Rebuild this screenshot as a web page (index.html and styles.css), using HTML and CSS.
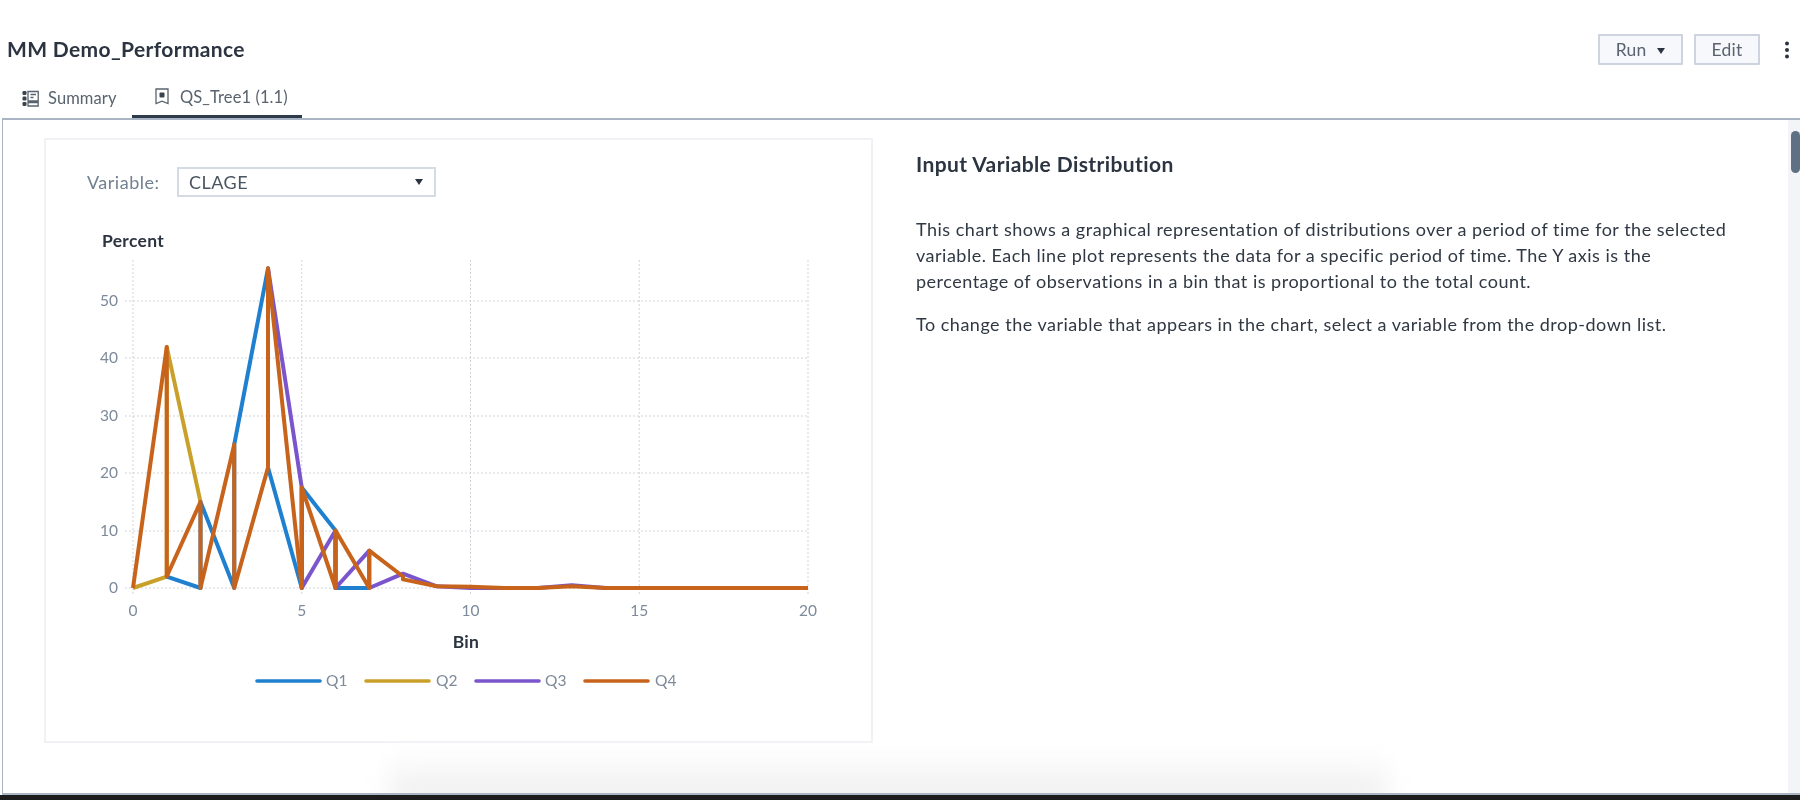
FILE: index.html
```html
<!DOCTYPE html>
<html lang="en">
<head>
<meta charset="utf-8">
<title>MM Demo_Performance</title>
<link rel="stylesheet" href="styles.css">
</head>
<body>
<div class="app">
  <header class="header">
    <h1 class="title">MM Demo_Performance</h1>
    <div class="actions">
      <button class="btn btn-run">Run <span class="caret"></span></button>
      <button class="btn btn-edit">Edit</button>
      <svg class="kebab" width="6" height="18" viewBox="0 0 6 18"><circle cx="3" cy="2.6" r="2"/><circle cx="3" cy="9" r="2"/><circle cx="3" cy="15.4" r="2"/></svg>
    </div>
  </header>
  <nav class="tabs">
    <div class="tab tab-summary">
      <svg class="tab-icon" width="17" height="17" viewBox="0 0 17 17"><g class="ic-fill"><rect x="0.5" y="1" width="4" height="4" rx="1.2"/><rect x="0.5" y="6.5" width="4" height="4" rx="1.2"/><rect x="0.5" y="12" width="4" height="4" rx="1.2"/></g><g class="ic-line"><path d="M6 1.500h10.200v9.500H6zM6 12.500h10.200v3.500H6z"/><path d="M8.500 4.500h5.500M8.500 7.500h3"/></g></svg>
      <span>Summary</span>
    </div>
    <div class="tab tab-active">
      <svg class="tab-icon" width="14" height="17" viewBox="0 0 14 17"><path class="ic-line" d="M1 1h12v14.600l-6-2.400-6 2.400z"/><rect class="ic-fill" x="4.500" y="4.500" width="5" height="5" rx="1"/></svg>
      <span>QS_Tree1 (1.1)</span>
    </div>
  </nav>
  <main class="panel">
    <section class="card">
      <div class="var-row">
        <label class="var-label">Variable:</label>
        <div class="select"><span>CLAGE</span><span class="caret"></span></div>
      </div>
      <svg class="chart" width="825" height="500" viewBox="0 0 825 500">
        <text class="axis-title" x="56" y="27">Percent</text>
        <g class="grid">
          <path d="M79 81H762M79 138H762M79 196H762M79 253H762M79 311H762M79 368H762"/>
          <path d="M87 40V376M255.750 40V376M424.500 40V376M593.250 40V376M762 40V376"/>
        </g>
        <g class="tick tick-y">
          <text x="72" y="86">50</text><text x="72" y="143">40</text><text x="72" y="201">30</text><text x="72" y="258">20</text><text x="72" y="316">10</text><text x="72" y="373">0</text>
        </g>
        <g class="tick tick-x">
          <text x="87" y="396">0</text><text x="255.750" y="396">5</text><text x="424.500" y="396">10</text><text x="593.250" y="396">15</text><text x="762" y="396">20</text>
        </g>
        <text class="axis-title axis-bin" x="420" y="428">Bin</text>
        <g transform="translate(87 368) scale(33.75 -5.74)">
          <polyline class="s q2" points="0,0 1,2 1,42 2,15"/>
          <polyline class="s q1" points="1,2 2,0 2,15 3,0 3,25 4,55.7 4,21 5,0 5,17.5 6,10 6,0 7,0"/>
          <polyline class="s q3" points="4,55.7 5,17.5 5,0 6,10 6,0 7,6.500 7,0 8,2.500 9,0.300 10,0 12,0 13,0.500 14,0 20,0"/>
          <polyline class="s q4" points="0,0 1,42 1,2 2,15 2,0 3,25 3,0 4,21 4,55.7 5,0 5,17.5 6,0 6,10 7,0 7,6.500 8,2 8,1.500 9,0.300 10,0.200 11,0 12,0 13,0.300 14,0 20,0"/>
        </g>
        <g class="legend">
          <path class="l q1" d="M211 461H274"/><text x="280" y="466">Q1</text>
          <path class="l q2" d="M320 461H383"/><text x="390" y="466">Q2</text>
          <path class="l q3" d="M430 461H493"/><text x="499" y="466">Q3</text>
          <path class="l q4" d="M539 461H602"/><text x="609" y="466">Q4</text>
        </g>
      </svg>
    </section>
    <section class="info">
      <h2 class="info-title">Input Variable Distribution</h2>
      <p>This chart shows a graphical representation of distributions over a period of time for the selected variable. Each line plot represents the data for a specific period of time. The Y axis is the percentage of observations in a bin that is proportional to the total count.</p>
      <p>To change the variable that appears in the chart, select a variable from the drop-down list.</p>
    </section>
    <div class="scroll-track"><div class="scroll-thumb"></div></div>
    <div class="bottom-shade"></div>
  </main>
  <footer class="strip"></footer>
</div>
</body>
</html>
```
FILE: styles.css
```css
* { box-sizing: border-box; }
html, body { margin: 0; height: 100%; background: #fff; overflow: hidden; }
body { font-family: "Lato", "Noto Sans", sans-serif; color: #2b3440; }
.app { height: 800px; display: flex; flex-direction: column; filter: blur(0.45px); }

.header { display: flex; justify-content: space-between; align-items: center; padding: 34px 10px 0 7px; }
.title { margin: 0 0 2px; font-size: 21px; letter-spacing: 0.35px; line-height: 29px; font-weight: 700; color: #2b3440; }
.actions { display: flex; align-items: center; }
.btn { height: 31px; padding: 0; font: 400 17.5px "Lato", sans-serif; letter-spacing: 0.2px; color: #59636f; background: #f6f8fb; border: 2px solid #cdd4df; border-radius: 1px; }
.btn-run { width: 85px; margin-right: 11px; }
.btn-edit { width: 66px; margin-right: 24px; }
.btn .caret { margin-left: 6px; }
.caret { display: inline-block; vertical-align: 2px; width: 0; height: 0; border-left: 4px solid transparent; border-right: 4px solid transparent; border-top: 6px solid #2b3440; }
.kebab { fill: #2b3440; }

.tabs { display: flex; height: 53px; padding: 13px 0 0 22px; }
.tab { display: flex; align-items: center; height: 40px; font-size: 16.5px; letter-spacing: 0.1px; color: #59636f; }
.tab-summary { gap: 9px; width: 110px; }
.tab-active { gap: 11px; width: 170px; padding-left: 23px; border-bottom: 3px solid #2d3a4a; margin-bottom: -1px; position: relative; z-index: 1; }
.tab-icon { flex: none; }
.ic-fill { fill: #3a4450; }
.ic-line { fill: none; stroke: #59636f; stroke-width: 1.3; }

.panel { flex: 1; min-height: 0; position: relative; overflow: hidden; display: flex; align-items: flex-start; margin-left: 2px; border-top: 2px solid #a9b5c5; border-left: 1px solid #a9b5c5; border-bottom: 2px solid #a9b5c5; }
.card { flex: none; width: 829px; height: 605px; margin: 18px 0 0 41px; border: 2px solid #eff1f4; }
.var-row { display: flex; align-items: center; height: 30px; margin-top: 27px; padding-left: 41px; }
.var-label { width: 90px; padding-bottom: 1px; font-size: 18px; letter-spacing: 0.5px; color: #72808f; }
.select { display: flex; align-items: center; justify-content: space-between; width: 259px; height: 30px; padding: 0 11px 1px 10px; font-size: 18px; letter-spacing: 0.5px; color: #4b5561; border: 2px solid #d5dbe4; }
.chart { display: block; margin-top: 23px; }
.axis-title { font-size: 17.5px; letter-spacing: 0.3px; font-weight: 700; fill: #2b3440; }
.axis-bin { text-anchor: middle; }
.grid path { fill: none; stroke: #cfd3d8; stroke-width: 1; stroke-dasharray: 2 2; }
.tick text, .legend text { font-size: 15.5px; fill: #7d8a9a; }
.tick-y text { text-anchor: end; }
.tick-x text { text-anchor: middle; }
.s { fill: none; stroke-width: 4; stroke-linejoin: round; vector-effect: non-scaling-stroke; }
.l { fill: none; stroke-width: 3.6; stroke-linecap: round; }
.q1 { stroke: #1f80d0; }
.q2 { stroke: #c9a12a; }
.q3 { stroke: #7b55cc; }
.q4 { stroke: #c8631b; }

.info { flex: none; width: 818px; margin: 31px 0 0 43px; font-size: 18px; letter-spacing: 0.5px; line-height: 26px; color: #2f3843; }
.info-title { margin: 0 0 39px; font-size: 21px; letter-spacing: 0.4px; line-height: 26px; font-weight: 700; color: #2b3440; }
.info p { margin: 0 0 17px; }

.scroll-track { position: absolute; top: 0; right: 0; bottom: 0; width: 12px; background: #f3f4f8; }
.scroll-thumb { width: 9px; height: 42px; margin: 11px 0 0 3px; background: #5f6f84; border-radius: 5px; }
.bottom-shade { position: absolute; left: 385px; bottom: -10px; width: 1000px; height: 50px; background: linear-gradient(to top, #ebebeb, #fff); filter: blur(12px); pointer-events: none; }
.strip { flex: none; height: 5px; background: #1c1c1c; }
```
